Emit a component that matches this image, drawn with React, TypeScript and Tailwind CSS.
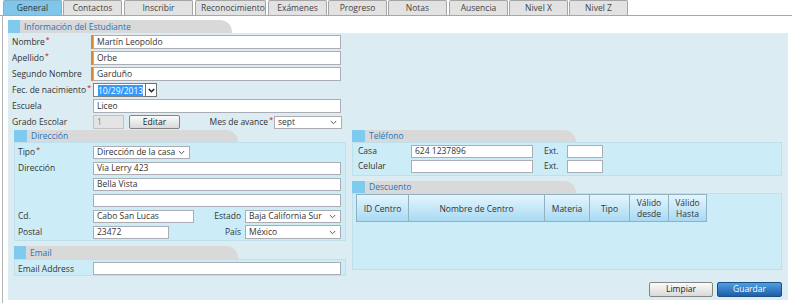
import React from "react";

const Chevron = ({ bold = false }: { bold?: boolean }) => (
  <svg width="7" height="5" viewBox="0 0 7 5" className="shrink-0">
    <path d="M0.8 1L3.5 3.7L6.2 1" fill="none" stroke={bold ? "#222" : "#555"} strokeWidth={bold ? 1.6 : 1} />
  </svg>
);

const Req = () => <span className="text-[#e00000] text-[7px] align-top leading-none ml-[1px]">*</span>;

function Box({ cls, children }: { cls: string; children?: React.ReactNode }) {
  return (
    <div className={"bg-white border border-[#abadb3] pl-[3px] text-[#333] whitespace-nowrap overflow-hidden flex items-center shrink-0 " + cls}>
      {children}
    </div>
  );
}

function Select({ cls, value }: { cls: string; value: string }) {
  return (
    <div className={"bg-white border border-[#abadb3] pl-[3px] pr-[4px] text-[#333] whitespace-nowrap overflow-hidden flex items-center justify-between shrink-0 " + cls}>
      <span>{value}</span>
      <Chevron />
    </div>
  );
}

function Tab({ label, cls, active }: { label: string; cls: string; active?: boolean }) {
  return (
    <div
      className={
        "h-[15px] border border-b-0 rounded-t-[2px] overflow-hidden whitespace-nowrap text-center leading-[14px] px-[5px] shrink-0 " +
        (active ? "bg-[#80c5ea] border-[#7fb2cf] text-[#333] " : "bg-[#e2e2e2] border-[#a5a5a5] text-[#444] ") +
        cls
      }
    >
      {label}
    </div>
  );
}

function Header({ title, big }: { title: string; big?: boolean }) {
  return (
    <div className={"flex " + (big ? "h-[13px]" : "h-[12px]")}>
      <div className={big ? "w-[12px] h-[13px] bg-[#7fcbef]" : "w-[13px] h-[12px] bg-[#7fcbef]"} />
      <div
        className={
          "bg-[#d9d9d9] rounded-tr-[12px] pl-[4px] text-[#2474b9] whitespace-nowrap " +
          (big ? "w-[212px] h-[13px] leading-[13px]" : "w-[211px] h-[12px] leading-[12px]")
        }
      >
        {title}
      </div>
    </div>
  );
}

function InfoRow({ label, req, bar, value }: { label: string; req?: boolean; bar?: boolean; value: string }) {
  return (
    <div className="h-[16px] flex items-center">
      <div className="w-[83px] pl-[4px] whitespace-nowrap">
        {label}
        {req && <Req />}
      </div>
      {bar ? <div className="w-[2px] h-[14px] bg-[#e0892c]" /> : <div className="w-[2px]" />}
      <Box cls="w-[248px] h-[14px]">{value}</Box>
    </div>
  );
}

function Btn({ label, cls, primary }: { label: string; cls: string; primary?: boolean }) {
  return (
    <div
      className={
        "flex items-center justify-center rounded-[2px] border shrink-0 " +
        (primary
          ? "bg-linear-to-b from-[#4d9fe2] to-[#1c5fa9] border-[#1e4d82] text-white "
          : "bg-linear-to-b from-[#fbfbfb] to-[#d9d9d9] border-[#858585] text-[#222] ") +
        cls
      }
    >
      {label}
    </div>
  );
}

export default function App() {
  return (
    <div className="w-[792px] h-[303px] bg-white overflow-hidden font-['Open_Sans',sans-serif] text-[8.5px] text-[#333]">
      {/* Tabs */}
      <div className="h-[16px] flex items-end pl-[3px] border-b border-[#a8a8a8]">
        <Tab label="General" cls="w-[59px]" active />
        <Tab label="Contactos" cls="w-[59px] ml-[1px]" />
        <Tab label="Inscribir" cls="w-[69px] ml-[2px]" />
        <Tab label="Reconocimiento" cls="w-[71px] ml-[2px] text-left" />
        <Tab label="Exámenes" cls="w-[59px] ml-[2px]" />
        <Tab label="Progreso" cls="w-[59px] ml-[1px]" />
        <Tab label="Notas" cls="w-[59px] ml-[1px]" />
        <Tab label="Ausencia" cls="w-[59px] ml-[2px]" />
        <Tab label="Nivel X" cls="w-[59px] ml-[1px]" />
        <Tab label="Nivel Z" cls="w-[59px] ml-[1px]" />
      </div>

      {/* Container */}
      <div className="ml-[2px] border-l border-[#b4b4b4] pl-[5px] pt-[4px] h-[287px]">
        <Header title="Información del Estudiante" big />
        <div className="w-[780px] h-[267px] bg-[#dbedf3] flex flex-col">
          {/* Info rows */}
          <div className="w-[334px] pt-[1px] flex flex-col">
            <InfoRow label="Nombre" req bar value="Martín Leopoldo" />
            <InfoRow label="Apellido" req bar value="Orbe" />
            <InfoRow label="Segundo Nombre" bar value="Garduño" />
            <div className="h-[16px] flex items-center">
              <div className="w-[83px] pl-[4px] whitespace-nowrap">
                Fec. de nacimiento
                <Req />
              </div>
              <div className="w-[2px]" />
              <div className="w-[52px] h-[14px] border border-r-0 border-[#808080] bg-white flex items-center pl-[4px]">
                <span className="bg-[#3399ff] text-white leading-[11px]">10/29/2013</span>
              </div>
              <div className="w-[12px] h-[14px] border border-[#707070] bg-white flex items-center justify-center">
                <Chevron bold />
              </div>
            </div>
            <InfoRow label="Escuela" value="Liceo" />
            <div className="h-[16px] flex items-center">
              <div className="w-[83px] pl-[4px] whitespace-nowrap">Grado Escolar</div>
              <div className="w-[2px]" />
              <div className="w-[31px] h-[14px] bg-[#e4e4e4] border border-[#c2c2c2] pl-[3px] text-[#8a8a8a] flex items-center">1</div>
              <Btn label="Editar" cls="w-[51px] h-[14px] ml-[5px]" />
              <div className="flex-1" />
              <div className="whitespace-nowrap mr-[1px]">
                Mes de avance
                <Req />
              </div>
              <Select cls="w-[68px] h-[13px]" value="sept" />
            </div>
          </div>

          {/* Two columns */}
          <div className="flex items-start pl-[6px] gap-[6px]">
            {/* Left column */}
            <div className="w-[332px] flex flex-col">
              <Header title="Dirección" />
              <div className="bg-[#ccedf8] border border-[#bfdfea] pt-[1px] flex flex-col">
                <div className="h-[16px] flex items-center">
                  <div className="w-[78px] pl-[3px]">
                    Tipo
                    <Req />
                  </div>
                  <Select cls="w-[97px] h-[13px]" value="Dirección de la casa" />
                </div>
                <div className="h-[16px] flex items-center">
                  <div className="w-[78px] pl-[3px]">Dirección</div>
                  <Box cls="w-[248px] h-[13px]">Via Lerry 423</Box>
                </div>
                <div className="h-[16px] flex items-center">
                  <div className="w-[78px]" />
                  <Box cls="w-[248px] h-[13px]">Bella Vista</Box>
                </div>
                <div className="h-[16px] flex items-center">
                  <div className="w-[78px]" />
                  <Box cls="w-[248px] h-[13px]" />
                </div>
                <div className="h-[16px] flex items-center">
                  <div className="w-[78px] pl-[3px]">Cd.</div>
                  <Box cls="w-[101px] h-[13px]">Cabo San Lucas</Box>
                  <div className="w-[51px] text-right pr-[4px]">Estado</div>
                  <Select cls="w-[96px] h-[13px]" value="Baja California Sur" />
                </div>
                <div className="h-[16px] flex items-center">
                  <div className="w-[78px] pl-[3px]">Postal</div>
                  <Box cls="w-[76px] h-[13px]">23472</Box>
                  <div className="w-[76px] text-right pr-[4px]">País</div>
                  <Select cls="w-[96px] h-[14px]" value="México" />
                </div>
              </div>

              <div className="mt-[5px]">
                <Header title="Email" big />
              </div>
              <div className="bg-[#ccedf8] border border-[#bfdfea] pt-[2px] pb-0 flex items-center">
                <div className="w-[78px] pl-[3px] h-[13px] leading-[13px]">Email Address</div>
                <Box cls="w-[248px] h-[13px]" />
              </div>
            </div>

            {/* Right column */}
            <div className="w-[430px] flex flex-col">
              <Header title="Teléfono" />
              <div className="bg-[#ccedf8] border border-[#bfdfea] pt-[2px] pb-[2px] flex flex-col gap-[2px]">
                <div className="h-[13px] flex items-center">
                  <div className="w-[58px] pl-[5px]">Casa</div>
                  <Box cls="w-[122px] h-[13px]">624 1237896</Box>
                  <div className="w-[34px] pl-[11px]">Ext.</div>
                  <Box cls="w-[36px] h-[13px]" />
                </div>
                <div className="h-[13px] flex items-center">
                  <div className="w-[58px] pl-[5px]">Celular</div>
                  <Box cls="w-[122px] h-[13px]" />
                  <div className="w-[34px] pl-[11px]">Ext.</div>
                  <Box cls="w-[36px] h-[13px]" />
                </div>
              </div>

              <div className="mt-[5px]">
                <Header title="Descuento" />
              </div>
              <div className="bg-[#ccedf8] border border-[#bfdfea] h-[77px] pl-[3px]">
                <div className="flex w-[351px] h-[28px] border border-[#8fb1c2] text-[#333] text-center leading-[11px]">
                  <div className="w-[52px] flex items-center justify-center border-r border-[#8fb1c2] bg-linear-to-b from-[#e4f5fd] to-[#a8daf3]">ID Centro</div>
                  <div className="w-[136px] flex items-center justify-center border-r border-[#8fb1c2] bg-linear-to-b from-[#e4f5fd] to-[#a8daf3]">Nombre de Centro</div>
                  <div className="w-[45px] flex items-center justify-center border-r border-[#8fb1c2] bg-linear-to-b from-[#e4f5fd] to-[#a8daf3]">Materia</div>
                  <div className="w-[40px] flex items-center justify-center border-r border-[#8fb1c2] bg-linear-to-b from-[#e4f5fd] to-[#a8daf3]">Tipo</div>
                  <div className="w-[39px] flex items-center justify-center border-r border-[#8fb1c2] bg-linear-to-b from-[#e4f5fd] to-[#a8daf3]">
                    Válido
                    <br />
                    desde
                  </div>
                  <div className="flex-1 flex items-center justify-center bg-linear-to-b from-[#e4f5fd] to-[#a8daf3]">
                    Válido
                    <br />
                    Hasta
                  </div>
                </div>
              </div>
            </div>
          </div>

          {/* Buttons */}
          <div className="flex justify-end gap-[4px] pr-[6px] mt-[6px]">
            <Btn label="Limpiar" cls="w-[64px] h-[15px]" />
            <Btn label="Guardar" cls="w-[65px] h-[15px]" primary />
          </div>
        </div>
      </div>
    </div>
  );
}
